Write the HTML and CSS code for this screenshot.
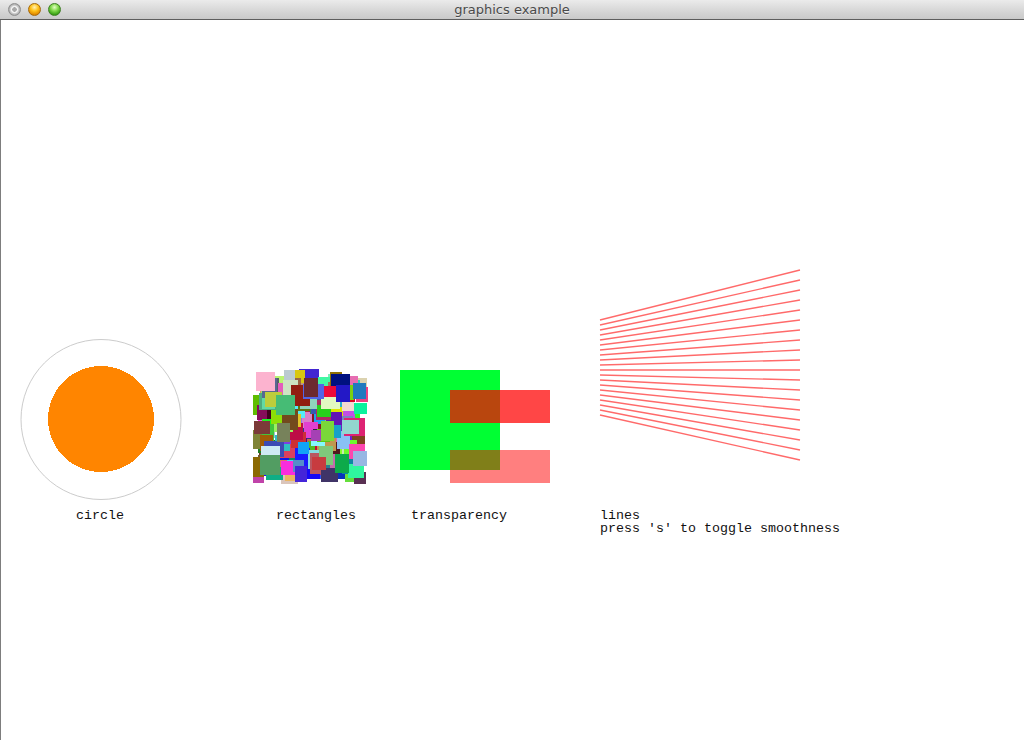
FILE: index.html
```html
<!DOCTYPE html>
<html>
<head>
<meta charset="utf-8">
<title>graphics example</title>
<link rel="stylesheet" href="styles.css">
</head>
<body>
<div class="window">
  <header class="titlebar">
    <div class="lights">
      <span class="light light-close"></span>
      <span class="light light-min"></span>
      <span class="light light-max"></span>
    </div>
    <div class="title">graphics example</div>
    <div class="spacer"></div>
  </header>
  <main class="canvas">
    <svg class="scene" width="1023" height="720" viewBox="0 0 1023 720">
      <circle class="ring" cx="100" cy="399.5" r="80"/>
      <circle class="disc" cx="100" cy="399" r="53"/>
      <g id="rects" class="rects"></g>
      <rect class="green" x="399" y="350" width="100" height="100"/>
      <rect class="red-var" x="449" y="370" width="100" height="33"/>
      <rect class="red-half" x="449" y="430" width="100" height="33"/>
      <g id="lines" class="lines"></g>
      <g class="labels">
        <text x="75" y="499">circle</text>
        <text x="275" y="499">rectangles</text>
        <text x="410" y="499">transparency</text>
        <text x="599" y="499">lines</text>
        <text x="599" y="512">press 's' to toggle smoothness</text>
      </g>
    </svg>
  </main>
</div>
<script src="script.js"></script>
</body>
</html>
```

FILE: styles.css
```css
html, body {
  margin: 0;
  padding: 0;
  background: #ffffff;
}
body {
  width: 1024px;
  height: 740px;
  overflow: hidden;
  font-family: "DejaVu Sans", "Liberation Sans", sans-serif;
}
.window {
  display: flex;
  flex-direction: column;
  height: 740px;
}
.titlebar {
  height: 19px;
  flex: none;
  border-bottom: 1px solid #5e5e5e;
  background: linear-gradient(#ebebeb, #d9d9d9 50%, #c9c9c9);
  display: grid;
  grid-template-columns: 1fr auto 1fr;
  align-items: center;
}
.lights {
  display: flex;
  gap: 7px;
  padding-left: 8px;
}
.light {
  width: 13px;
  height: 13px;
  border-radius: 50%;
  box-sizing: border-box;
}
.light-close {
  background: radial-gradient(circle at 50% 50%, #a8a8a8 0 2px, #f2f2f2 2.5px 3.2px, #cfcfcf 4px, #a0a0a0 6px);
  border: 1px solid #8e8e8e;
}
.light-min {
  background: radial-gradient(circle at 50% 30%, #fff2b8 0, #ffc21a 40%, #e08a00 75%, #b56a00 100%);
  border: 1px solid #a4690a;
}
.light-max {
  background: radial-gradient(circle at 50% 30%, #e4ffc4 0, #7fd84a 40%, #3aa116 75%, #2b7d10 100%);
  border: 1px solid #3d7f23;
}
.title {
  font-size: 13px;
  color: #4a4a4a;
  line-height: 19px;
  text-shadow: 0 1px 0 rgba(255, 255, 255, 0.5);
}
.canvas {
  flex: 1;
  border-left: 1px solid #7d7d7d;
  background: #ffffff;
}
.scene {
  display: block;
}
.ring {
  fill: none;
  stroke: #cccccc;
  stroke-width: 1;
}
.disc {
  fill: #ff8500;
  shape-rendering: crispEdges;
}
.rects rect {
  shape-rendering: crispEdges;
}
.green {
  fill: #00ff33;
  shape-rendering: crispEdges;
}
.red-var {
  fill: #ff0000;
  fill-opacity: 0.725;
  shape-rendering: crispEdges;
}
.red-half {
  fill: #ff0000;
  fill-opacity: 0.5;
  shape-rendering: crispEdges;
}
.lines line {
  stroke: #ff6a6a;
  stroke-width: 1.4;
}
.labels text {
  font-family: "Liberation Mono", "DejaVu Sans Mono", monospace;
  font-size: 13.33px;
  fill: #111111;
}
```

FILE: script.js
```js
(function () {
  var NS = "http://www.w3.org/2000/svg";
  var seed = 7331;
  function rand() {
    seed |= 0; seed = (seed + 0x6D2B79F5) | 0;
    var t = Math.imul(seed ^ (seed >>> 15), 1 | seed);
    t = (t + Math.imul(t ^ (t >>> 7), 61 | t)) ^ t;
    return ((t ^ (t >>> 14)) >>> 0) / 4294967296;
  }
  function rnd(a, b) { return a + rand() * (b - a); }

  var g = document.getElementById("rects");
  for (var i = 0; i < 200; i++) {
    var r = Math.floor(rnd(0, 255));
    var gr = Math.floor(rnd(0, 255));
    var b = Math.floor(rnd(0, 255));
    var w = Math.round(rnd(11, 21));
    var h = Math.round(rnd(11, 21));
    var rect = document.createElementNS(NS, "rect");
    rect.setAttribute("x", Math.round(rnd(251, 367 - w)));
    rect.setAttribute("y", Math.round(rnd(349, 464 - h)));
    rect.setAttribute("width", w);
    rect.setAttribute("height", h);
    rect.setAttribute("fill", "rgb(" + r + "," + gr + "," + b + ")");
    g.appendChild(rect);
  }

  var lg = document.getElementById("lines");
  for (var j = 0; j < 20; j++) {
    var ln = document.createElementNS(NS, "line");
    ln.setAttribute("x1", 599);
    ln.setAttribute("y1", 300 + j * 5);
    ln.setAttribute("x2", 799);
    ln.setAttribute("y2", 250 + j * 10);
    lg.appendChild(ln);
  }
})();
```
